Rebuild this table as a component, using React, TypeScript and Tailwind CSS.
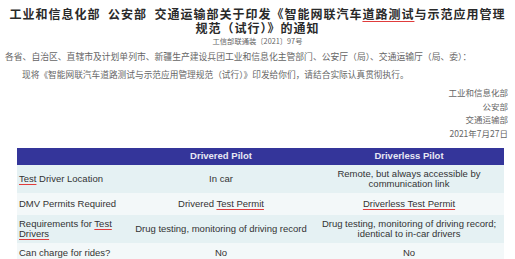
import React from 'react'

const cjk = { fontFamily: '"Noto Sans CJK SC", "Noto Sans", sans-serif' }
const arial = { fontFamily: '"Liberation Sans", Arial, sans-serif' }

function Mark({ children, block }: { children: React.ReactNode; block?: boolean }) {
  return (
    <span
      className={`underline decoration-[#e03c3c] decoration-[1px] underline-offset-[2px] ${
        block ? 'inline-block leading-[14px] align-top' : ''
      }`}
    >
      {children}
    </span>
  )
}

const rows = [
  {
    label: <><Mark>Test</Mark> Driver Location</>,
    drivered: 'In car',
    driverless: <>Remote, but always accessible by<br />communication link</>,
    h: 'h-[28px]',
    bg: 'bg-[#e5f1f3]',
  },
  {
    label: 'DMV Permits Required',
    drivered: <>Drivered <Mark>Test Permit</Mark></>,
    driverless: <Mark>Driverless Test Permit</Mark>,
    h: 'h-[22px]',
    bg: 'bg-[#f3f8f9]',
  },
  {
    label: <>Requirements for <Mark>Test</Mark><br /><Mark>Drivers</Mark></>,
    drivered: 'Drug testing, monitoring of driving record',
    driverless: <>Drug testing, monitoring of driving record;<br />identical to in-car drivers</>,
    h: 'h-[28px]',
    bg: 'bg-[#e5f1f3]',
  },
  {
    label: 'Can charge for rides?',
    drivered: 'No',
    driverless: 'No',
    h: 'h-[20px]',
    bg: 'bg-[#f3f8f9]',
  },
]

export default function App() {
  return (
    <div className="w-[515px] h-[259px] overflow-hidden bg-white">
      <div style={cjk} className="pt-[7px] text-[#2a2a2a]">
        <h1 className="text-[12px] leading-[14px] font-bold tracking-[1px] text-center whitespace-nowrap">
          工业和信息化部&nbsp;&nbsp;公安部&nbsp;&nbsp;交通运输部关于印发《智能网联汽车<Mark block>道路测试</Mark>与示范应用管理
          <br />
          规范（试行）》的通知
        </h1>
        <div className="text-[7.3px] leading-[10px] text-center text-[#666] mt-[1px]">工信部联通装〔2021〕97号</div>
        <div className="text-[8.8px] leading-[12px] text-[#666] pl-[5px] mt-[5px] whitespace-nowrap">
          各省、自治区、直辖市及计划单列市、新疆生产建设兵团工业和信息化主管部门、公安厅（局）、交通运输厅（局、委）：
        </div>
        <div className="text-[8.7px] leading-[12px] text-[#666] pl-[22px] mt-[6px] whitespace-nowrap">
          现将《智能网联汽车道路测试与示范应用管理规范（试行）》印发给你们，请结合实际认真贯彻执行。
        </div>
        <div className="mt-[5px] pr-[7px] text-right text-[8.5px] leading-[13.5px] text-[#666]">
          <div>工业和信息化部</div>
          <div>公安部</div>
          <div>交通运输部</div>
          <div>2021年7月27日</div>
        </div>
      </div>

      <div style={arial} className="ml-[17px] mt-[8px] w-[487px] text-[9.5px] text-[#333]">
        <div className="grid grid-cols-[111px_186px_190px] h-[17px] bg-[#34359a] font-bold text-[#e8e8f4] items-center">
          <div />
          <div className="text-center">Drivered Pilot</div>
          <div className="text-center">Driverless Pilot</div>
        </div>
        {rows.map((r, i) => (
          <div key={i} className={`grid grid-cols-[111px_186px_190px] items-center leading-[10px] ${r.h} ${r.bg}`}>
            <div className="pl-[2px]">{r.label}</div>
            <div className="text-center whitespace-nowrap">{r.drivered}</div>
            <div className="text-center whitespace-nowrap">{r.driverless}</div>
          </div>
        ))}
      </div>
    </div>
  )
}
